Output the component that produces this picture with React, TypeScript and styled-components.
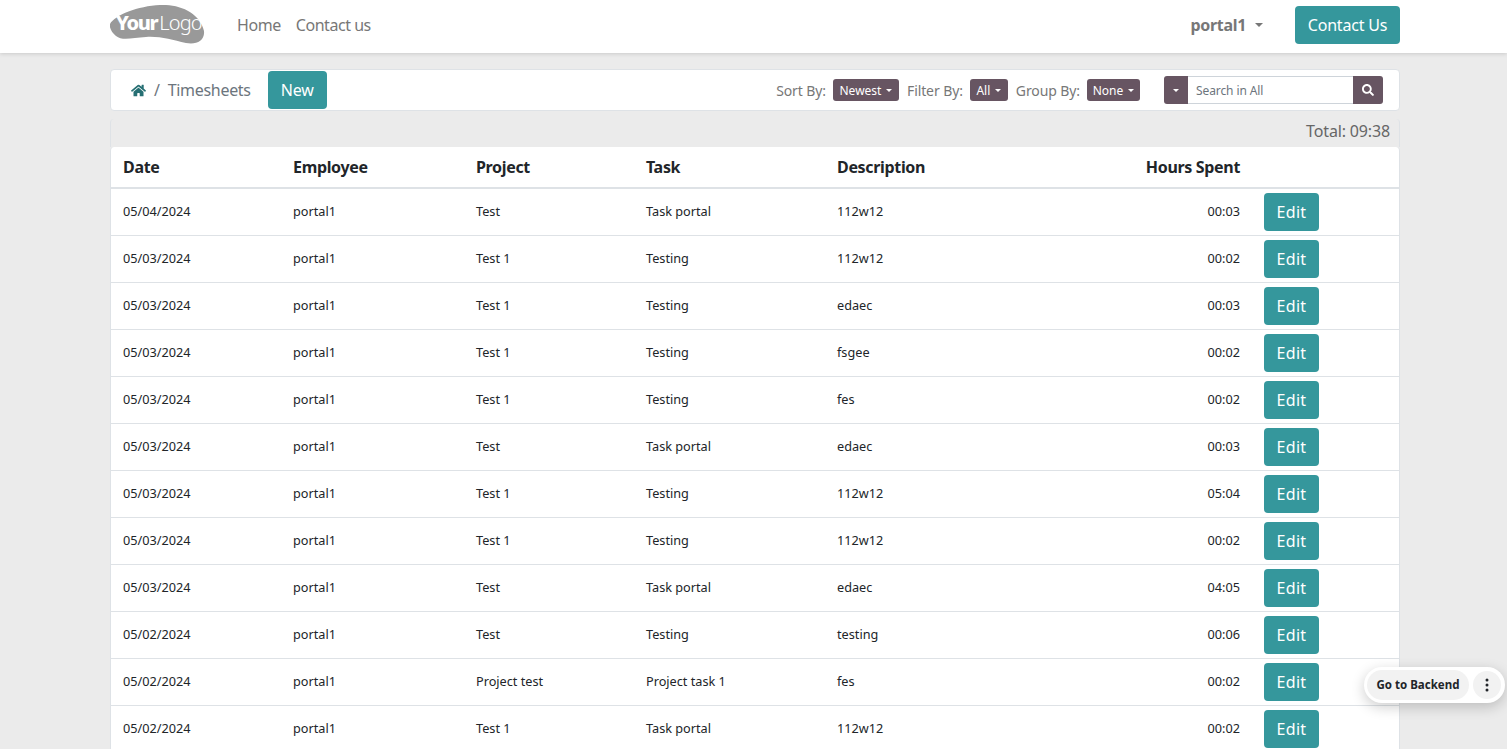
import styled, { createGlobalStyle } from "styled-components";
import { FaHome, FaSearch } from "react-icons/fa";

type Entry = {
  date: string;
  project: string;
  task: string;
  description: string;
  hours: string;
};

const entries: Entry[] = [
  { date: "05/04/2024", project: "Test", task: "Task portal", description: "112w12", hours: "00:03" },
  { date: "05/03/2024", project: "Test 1", task: "Testing", description: "112w12", hours: "00:02" },
  { date: "05/03/2024", project: "Test 1", task: "Testing", description: "edaec", hours: "00:03" },
  { date: "05/03/2024", project: "Test 1", task: "Testing", description: "fsgee", hours: "00:02" },
  { date: "05/03/2024", project: "Test 1", task: "Testing", description: "fes", hours: "00:02" },
  { date: "05/03/2024", project: "Test", task: "Task portal", description: "edaec", hours: "00:03" },
  { date: "05/03/2024", project: "Test 1", task: "Testing", description: "112w12", hours: "05:04" },
  { date: "05/03/2024", project: "Test 1", task: "Testing", description: "112w12", hours: "00:02" },
  { date: "05/03/2024", project: "Test", task: "Task portal", description: "edaec", hours: "04:05" },
  { date: "05/02/2024", project: "Test", task: "Testing", description: "testing", hours: "00:06" },
  { date: "05/02/2024", project: "Project test", task: "Project task 1", description: "fes", hours: "00:02" },
  { date: "05/02/2024", project: "Test 1", task: "Task portal", description: "112w12", hours: "00:02" },
];

const GlobalStyle = createGlobalStyle`
  html, body {
    margin: 0;
    height: 749px;
    overflow: hidden;
    background: #ebebeb;
    font-family: "Noto Sans", "Open Sans", sans-serif;
    color: #212529;
  }
`;

const Navbar = styled.header`
  height: 53px;
  box-sizing: border-box;
  padding-bottom: 3px;
  background: #fff;
  box-shadow: 0 1px 4px rgba(0, 0, 0, 0.14);
  position: relative;
`;

const NavInner = styled.div`
  width: 1290px;
  height: 100%;
  margin-left: 110px;
  display: flex;
  align-items: center;
`;

const NavLink = styled.a`
  font-size: 16px;
  letter-spacing: -0.45px;
  color: #777;
  margin-right: 15px;
`;

const LogoMark = styled.svg`
  width: 95px;
  height: 40px;
  margin-right: 32px;
  display: block;
`;

const UserMenu = styled.div`
  margin-left: auto;
  margin-right: 32px;
  display: flex;
  align-items: center;
  gap: 9px;
  font-size: 16px;
  font-weight: 700;
  letter-spacing: -0.3px;
  color: #777;
`;

const Caret = styled.span<{ $size?: number }>`
  display: inline-block;
  border-top: ${(p) => p.$size ?? 4}px solid currentColor;
  border-left: ${(p) => p.$size ?? 4}px solid transparent;
  border-right: ${(p) => p.$size ?? 4}px solid transparent;
`;

const PrimaryButton = styled.button<{ $w: number }>`
  width: ${(p) => p.$w}px;
  height: 38px;
  padding: 0;
  border: 0;
  border-radius: 4px;
  background: #35979c;
  color: #fff;
  font-family: inherit;
  font-size: 16px;
  letter-spacing: -0.2px;
`;

const EditButton = styled(PrimaryButton)`
  display: block;
  letter-spacing: 0.3px;
`;

const Page = styled.main`
  width: 1290px;
  margin: 16px 0 0 110px;
`;

const Toolbar = styled.div`
  height: 42px;
  box-sizing: border-box;
  background: #fff;
  border: 1px solid #dee2e6;
  border-radius: 4px;
  display: flex;
  align-items: center;
  padding: 0 16px 0 20px;
`;

const Crumbs = styled.nav`
  display: flex;
  align-items: center;
  font-size: 16px;
  letter-spacing: -0.3px;
  color: #6c757d;
  margin-right: 17px;
`;

const HomeLink = styled.span`
  display: flex;
  color: #266f73;
  font-size: 15px;
`;

const Slash = styled.span`
  margin: 0 8px;
`;

const Controls = styled.div`
  margin-left: auto;
  display: flex;
  align-items: center;
`;

const ControlLabel = styled.span`
  font-size: 14px;
  letter-spacing: -0.1px;
  color: #777;
  margin-right: 7px;
`;

const Dropdown = styled.button<{ $w: number }>`
  width: ${(p) => p.$w}px;
  height: 22px;
  padding: 0;
  margin-right: 8px;
  border: 0;
  border-radius: 3px;
  background: #675562;
  color: #fff;
  font-family: inherit;
  font-size: 12px;
  display: flex;
  align-items: center;
  justify-content: center;
  gap: 5px;
`;

const SearchGroup = styled.div`
  margin-left: 16px;
  height: 28px;
  width: 219px;
  display: flex;
`;

const SearchAddon = styled.button<{ $side: "left" | "right"; $w: number }>`
  width: ${(p) => p.$w}px;
  border: 0;
  padding: 0;
  background: #675562;
  color: #fff;
  display: flex;
  align-items: center;
  justify-content: center;
  font-size: 12px;
  border-radius: ${(p) => (p.$side === "left" ? "3px 0 0 3px" : "0 3px 3px 0")};
`;

const SearchInput = styled.input`
  flex: 1;
  min-width: 0;
  box-sizing: border-box;
  border: 1px solid #ced4da;
  border-width: 1px 0;
  padding: 0 8px;
  font-family: inherit;
  font-size: 12px;
  letter-spacing: -0.1px;
  outline: none;
  &::placeholder {
    color: #6c757d;
    opacity: 1;
  }
`;

const TotalBar = styled.div`
  margin-top: 8px;
  height: 28px;
  box-sizing: border-box;
  padding: 0 9px 4px 0;
  border-left: 1px solid #dee2e6;
  border-right: 1px solid #dee2e6;
  border-radius: 4px 4px 0 0;
  display: flex;
  align-items: center;
  justify-content: flex-end;
  font-size: 16px;
  letter-spacing: -0.15px;
  color: #666;
`;

const Card = styled.section`
  background: #fff;
  border: solid #dee2e6;
  border-width: 0 1px;
  border-radius: 4px 4px 0 0;
`;

const Table = styled.table`
  width: 100%;
  border-collapse: collapse;
  table-layout: fixed;
`;

const HeadCell = styled.th<{ $right?: boolean }>`
  height: 40px;
  padding: 0 12px;
  font-size: 16px;
  font-weight: 700;
  letter-spacing: -0.33px;
  text-align: ${(p) => (p.$right ? "right" : "left")};
  border-bottom: 2px solid #dee2e6;
  white-space: nowrap;
`;

const Cell = styled.td<{ $right?: boolean }>`
  height: 47px;
  padding: 0 12px 2px;
  box-sizing: border-box;
  font-size: 12.7px;
  text-align: ${(p) => (p.$right ? "right" : "left")};
  border-bottom: 1px solid #dee2e6;
  white-space: nowrap;
`;

const ActionCell = styled(Cell)`
  padding: 0 12px;
`;

const BackendPill = styled.div`
  position: fixed;
  left: 1364px;
  top: 667px;
  width: 141px;
  height: 36px;
  box-sizing: border-box;
  padding: 3px 4px 3px 3px;
  background: #fff;
  border-radius: 18px;
  box-shadow: 0 4px 14px rgba(0, 0, 0, 0.2);
  display: flex;
  align-items: center;
  gap: 4px;
`;

const BackendLink = styled.a`
  flex: 1;
  height: 100%;
  padding-bottom: 1px;
  box-sizing: border-box;
  border-radius: 15px;
  background: #f2f2f2;
  display: flex;
  align-items: center;
  justify-content: center;
  font-size: 11.5px;
  font-weight: 700;
  color: #212529;
`;

const MoreButton = styled.span`
  width: 28px;
  height: 28px;
  border-radius: 50%;
  background: #f2f2f2;
  display: flex;
  align-items: center;
  justify-content: center;
`;

const Logo = () => (
  <LogoMark viewBox="0 0 95 40" aria-label="YourLogo">
    <path
      d="M0 19C5 10 28 1 50 0C70 -1 90 8 94 26C95 36 86 40 76 38C62 35 50 31 36 32C22 33 12 36 6 31C2 28 -1 23 0 19Z"
      fill="#999"
    />
    <text x="6" y="25" fontSize="20" fill="#fff">
      <tspan fontWeight="800" letterSpacing="-1.4">
        Your
      </tspan>
      <tspan fontWeight="300" letterSpacing="-0.8" dx="2">
        Logo
      </tspan>
    </text>
  </LogoMark>
);

const App = () => (
  <>
    <GlobalStyle />
    <Navbar>
      <NavInner>
        <Logo />
        <NavLink>Home</NavLink>
        <NavLink>Contact us</NavLink>
        <UserMenu>
          portal1 <Caret />
        </UserMenu>
        <PrimaryButton $w={105}>Contact Us</PrimaryButton>
      </NavInner>
    </Navbar>
    <Page>
      <Toolbar>
        <Crumbs>
          <HomeLink>
            <FaHome />
          </HomeLink>
          <Slash>/</Slash>
          Timesheets
        </Crumbs>
        <PrimaryButton $w={59}>New</PrimaryButton>
        <Controls>
          <ControlLabel>Sort By:</ControlLabel>
          <Dropdown $w={66}>
            Newest <Caret $size={3} />
          </Dropdown>
          <ControlLabel>Filter By:</ControlLabel>
          <Dropdown $w={38}>
            All <Caret $size={3} />
          </Dropdown>
          <ControlLabel>Group By:</ControlLabel>
          <Dropdown $w={53}>
            None <Caret $size={3} />
          </Dropdown>
          <SearchGroup>
            <SearchAddon $side="left" $w={24}>
              <Caret $size={3} />
            </SearchAddon>
            <SearchInput placeholder="Search in All" />
            <SearchAddon $side="right" $w={30}>
              <FaSearch />
            </SearchAddon>
          </SearchGroup>
        </Controls>
      </Toolbar>
      <TotalBar>Total: 09:38</TotalBar>
      <Card>
        <Table>
          <colgroup>
            <col style={{ width: 170 }} />
            <col style={{ width: 183 }} />
            <col style={{ width: 170 }} />
            <col style={{ width: 191 }} />
            <col style={{ width: 240 }} />
            <col style={{ width: 187 }} />
            <col />
          </colgroup>
          <thead>
            <tr>
              <HeadCell>Date</HeadCell>
              <HeadCell>Employee</HeadCell>
              <HeadCell>Project</HeadCell>
              <HeadCell>Task</HeadCell>
              <HeadCell>Description</HeadCell>
              <HeadCell $right>Hours Spent</HeadCell>
              <HeadCell />
            </tr>
          </thead>
          <tbody>
            {entries.map((entry, i) => (
              <tr key={i}>
                <Cell>{entry.date}</Cell>
                <Cell>portal1</Cell>
                <Cell>{entry.project}</Cell>
                <Cell>{entry.task}</Cell>
                <Cell>{entry.description}</Cell>
                <Cell $right>{entry.hours}</Cell>
                <ActionCell>
                  <EditButton $w={55}>Edit</EditButton>
                </ActionCell>
              </tr>
            ))}
          </tbody>
        </Table>
      </Card>
    </Page>
    <BackendPill>
      <BackendLink>Go to Backend</BackendLink>
      <MoreButton>
        <svg width="4" height="14" viewBox="0 0 4 14">
          <circle cx="2" cy="2" r="1.5" fill="#212529" />
          <circle cx="2" cy="7" r="1.5" fill="#212529" />
          <circle cx="2" cy="12" r="1.5" fill="#212529" />
        </svg>
      </MoreButton>
    </BackendPill>
  </>
);

export default App;
